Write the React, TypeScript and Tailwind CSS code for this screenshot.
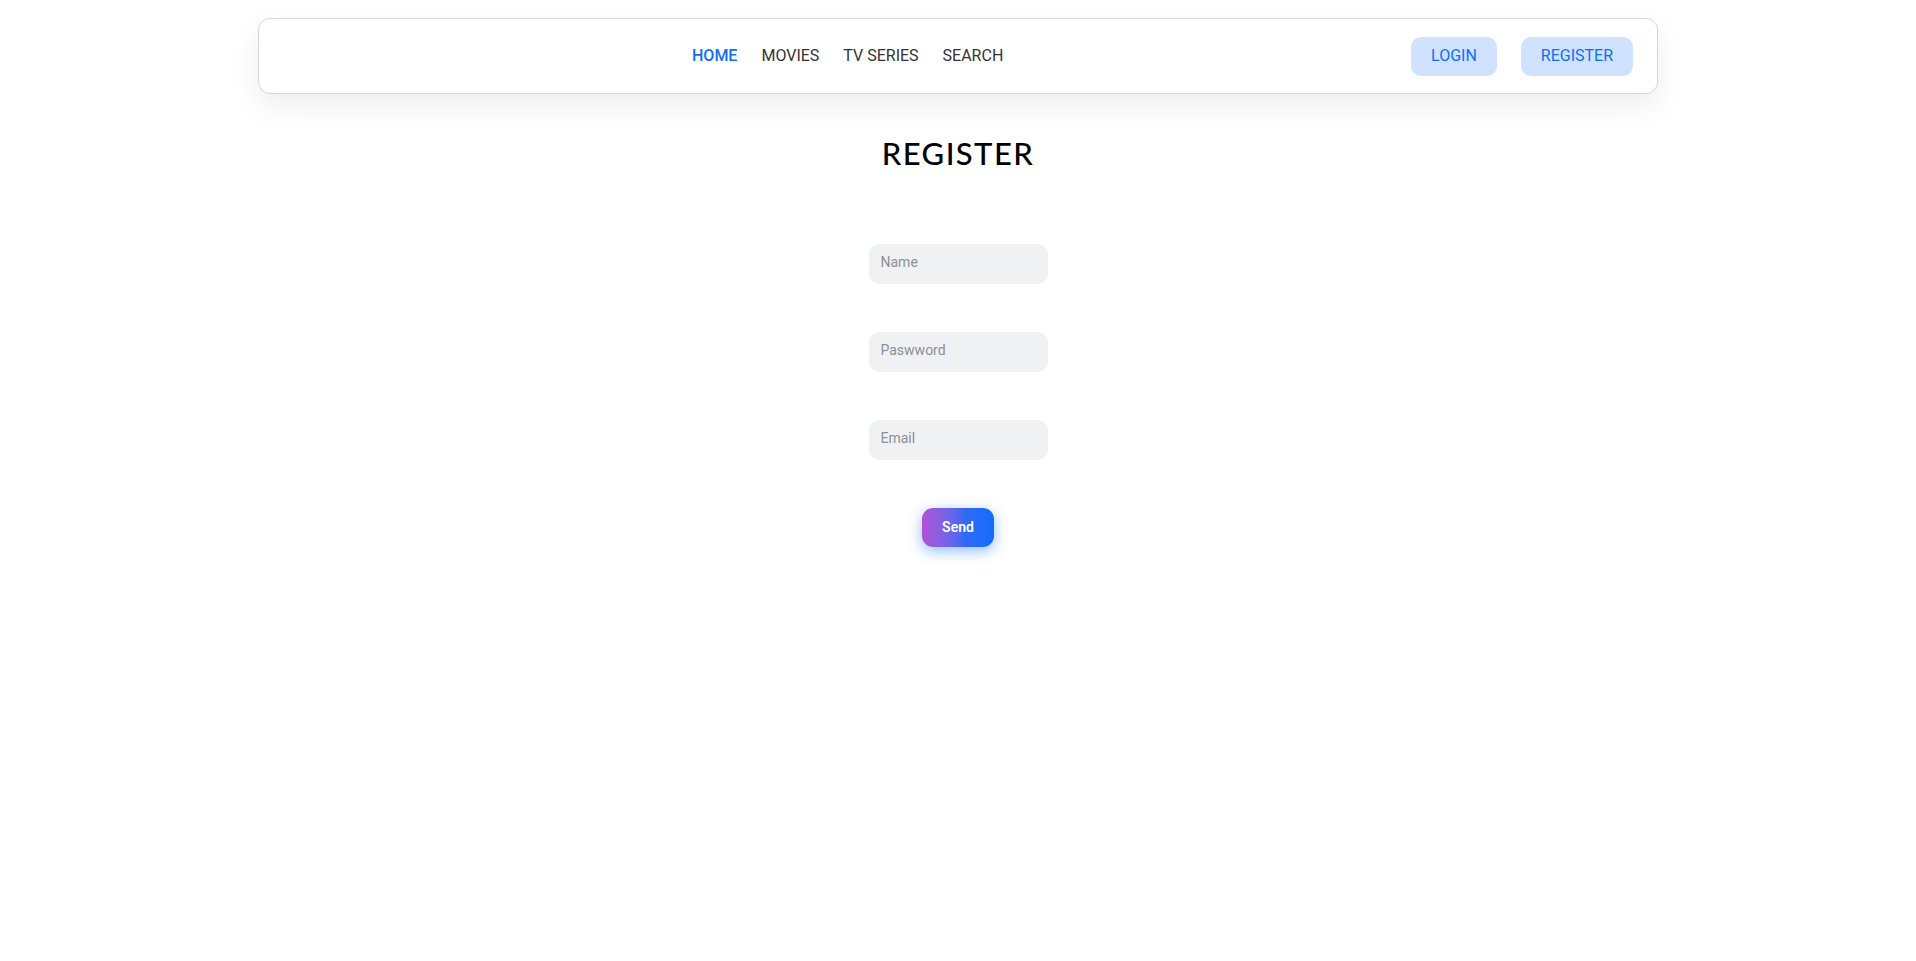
import React from 'react';

const links = ['HOME', 'MOVIES', 'TV SERIES', 'SEARCH'];

function Navbar() {
  return (
    <nav className="mx-auto flex h-[76px] w-[1400px] items-center rounded-[12px] border border-[#d6d6d6] bg-white pr-[24px] shadow-[0_12px_30px_rgba(0,0,0,0.07)]">
      <ul className="ml-[433px] flex items-center gap-[24px] text-[16px]">
        {links.map((l, i) => (
          <li key={l} className={i === 0 ? 'font-medium text-[#0d6efd]' : 'text-[#333]'}>
            {l}
          </li>
        ))}
      </ul>
      <div className="ml-auto flex items-center gap-[24px]">
        <button className="h-[39px] rounded-[10px] bg-[#cfe2ff] px-[20px] text-[16px] text-[#0d6efd]">LOGIN</button>
        <button className="h-[39px] rounded-[10px] bg-[#cfe2ff] px-[20px] text-[16px] text-[#0d6efd]">REGISTER</button>
      </div>
    </nav>
  );
}

function Field({ placeholder, type = 'text' }: { placeholder: string; type?: string }) {
  return (
    <input
      type={type}
      placeholder={placeholder}
      className="h-[40px] w-[179px] rounded-[11px] bg-[#f0f1f3] px-[12px] pb-[4px] text-[14px] text-[#333] outline-none placeholder:text-[#8b9096]"
    />
  );
}

export default function App() {
  return (
    <div className="min-h-screen bg-white pt-[18px] font-['Roboto',sans-serif]">
      <Navbar />
      <h1 className="mt-[39px] text-center font-['Lato',sans-serif] text-[31px] font-medium leading-[40px] tracking-[1.4px] text-black">
        REGISTER
      </h1>
      <form className="mt-[71px] flex flex-col items-center gap-[48px]" onSubmit={(e) => e.preventDefault()}>
        <Field placeholder="Name" />
        <Field placeholder="Paswword" type="password" />
        <Field placeholder="Email" type="email" />
        <button
          type="submit"
          className="h-[39px] w-[72px] rounded-[11px] bg-gradient-to-r from-[#b14fd8] via-[#2f6af3] via-60% to-[#0d6efd] text-[14px] font-semibold text-white shadow-[0_4px_14px_rgba(13,110,253,0.45)]"
        >
          Send
        </button>
      </form>
    </div>
  );
}
